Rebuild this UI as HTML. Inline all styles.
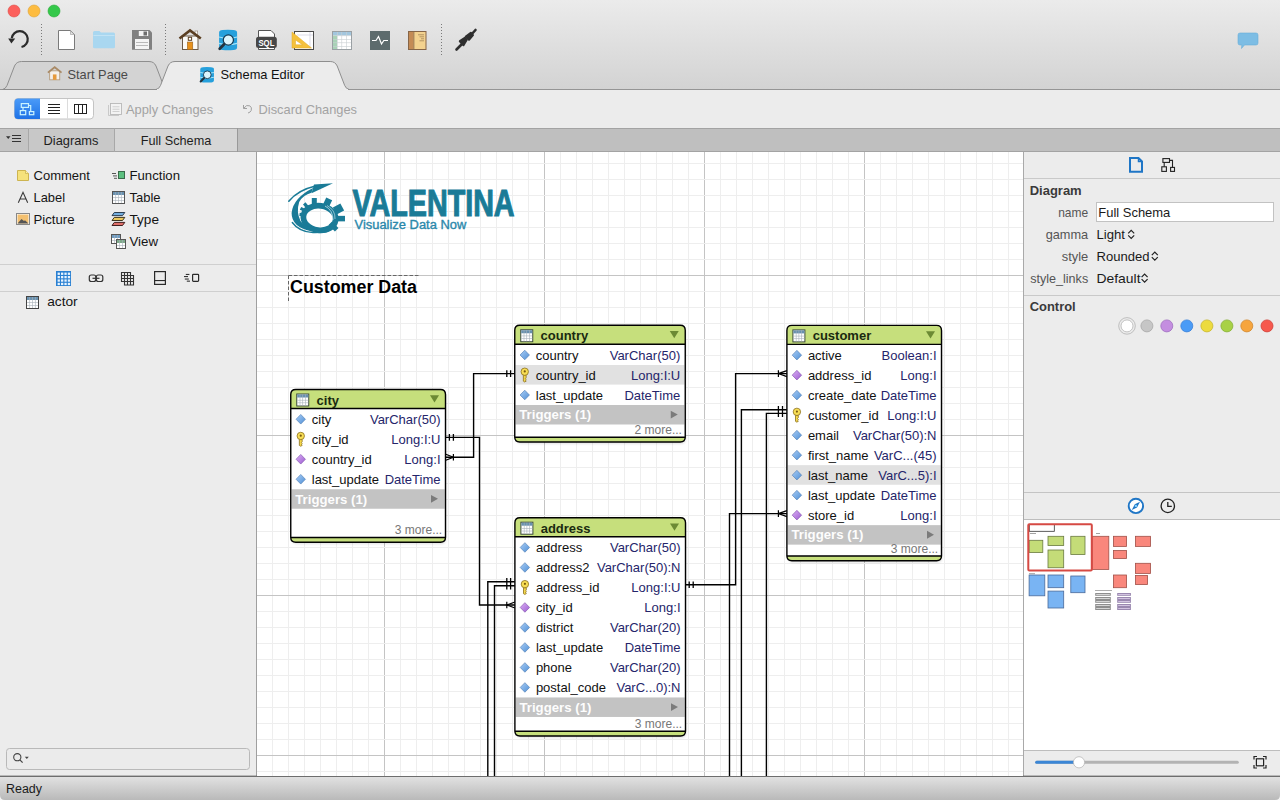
<!DOCTYPE html>
<html><head><meta charset="utf-8"><style>
html,body{margin:0;padding:0;width:1280px;height:800px;overflow:hidden;background:#ececec}
svg text{font-family:"Liberation Sans", sans-serif}
</style></head><body>
<svg width="1280" height="800" viewBox="0 0 1280 800" style="display:block;position:absolute;left:0;top:0">
<defs><linearGradient id="tb" x1="0" y1="0" x2="0" y2="1"><stop offset="0" stop-color="#ebebeb"/><stop offset="1" stop-color="#d3d3d3"/></linearGradient><linearGradient id="sb" x1="0" y1="0" x2="0" y2="1"><stop offset="0" stop-color="#e3e3e3"/><stop offset="1" stop-color="#b9b9b9"/></linearGradient><linearGradient id="hdr" x1="0" y1="0" x2="0" y2="1"><stop offset="0" stop-color="#c8e07e"/><stop offset="1" stop-color="#c4dd78"/></linearGradient><linearGradient id="dia" x1="0" y1="0" x2="1" y2="1"><stop offset="0" stop-color="#a9cdf5"/><stop offset="1" stop-color="#4f8fd6"/></linearGradient><linearGradient id="diap" x1="0" y1="0" x2="1" y2="1"><stop offset="0" stop-color="#dcb0f5"/><stop offset="1" stop-color="#9a5bd0"/></linearGradient><linearGradient id="segb" x1="0" y1="0" x2="0" y2="1"><stop offset="0" stop-color="#4b9bf8"/><stop offset="1" stop-color="#1e72e6"/></linearGradient><filter id="blur1" x="-10%" y="-10%" width="120%" height="120%"><feGaussianBlur stdDeviation="1"/></filter></defs>
<rect x="0" y="0" width="1280" height="89" fill="url(#tb)"/>
<circle cx="14" cy="11" r="6" fill="#fc605c" stroke="#de4a44" stroke-width="0.6"/>
<circle cx="34" cy="11" r="6" fill="#fdbc40" stroke="#dea236" stroke-width="0.6"/>
<circle cx="54" cy="11" r="6" fill="#34c84a" stroke="#27aa35" stroke-width="0.6"/>
<rect x="0" y="89" width="1280" height="1" fill="#959595"/>
<rect x="0" y="90" width="1280" height="38" fill="#ececec"/>
<rect x="0" y="128" width="1280" height="24" fill="#a3a3a3"/>
<rect x="0" y="129" width="1280" height="22" fill="#bfbfbf"/>
<rect x="0" y="129" width="28" height="22" fill="#c4c4c4"/>
<rect x="28" y="128" width="1" height="24" fill="#a8a8a8"/>
<rect x="29" y="129" width="85" height="22" fill="#c8c8c8"/>
<rect x="114" y="128" width="1" height="24" fill="#a8a8a8"/>
<rect x="115" y="129" width="122" height="22" fill="#d6d6d6"/>
<rect x="237" y="128" width="1" height="24" fill="#999"/>
<text x="71" y="144.5" font-size="13" fill="#1e1e1e" font-weight="normal" text-anchor="middle" textLength="55" lengthAdjust="spacingAndGlyphs" >Diagrams</text>
<text x="176" y="144.5" font-size="13" fill="#1e1e1e" font-weight="normal" text-anchor="middle" textLength="70.5" lengthAdjust="spacingAndGlyphs" >Full Schema</text>
<rect x="0" y="152" width="256" height="624" fill="#ececec"/>
<rect x="256" y="152" width="1" height="624" fill="#9f9f9f"/>
<rect x="1023" y="152" width="257" height="624" fill="#ececec"/>
<rect x="1023" y="152" width="1" height="624" fill="#a9a9a9"/>
<rect x="0" y="776" width="1280" height="24" fill="url(#sb)"/>
<rect x="0" y="775.6" width="1280" height="1.4" fill="#6e6e6e"/>
<text x="6" y="792.5" font-size="12.5" fill="#1a1a1a" font-weight="normal" text-anchor="start" textLength="36" lengthAdjust="spacingAndGlyphs" >Ready</text>
<path d="M 0 795 Q 0 800 5 800 L 0 800 Z M 1280 795 Q 1280 800 1275 800 L 1280 800 Z" fill="#f4f4f4"/>
<path d="M 21.5 47 A 8 8 0 1 0 11.8 38.2" fill="none" stroke="#2b2b2b" stroke-width="2.2"/>
<path d="M 8.2 38.6 L 15.2 38.6 L 11.4 43.6 Z" fill="#2b2b2b"/>
<rect x="41.0" y="24" width="1" height="1" fill="#7a7a7a"/>
<rect x="41.0" y="27" width="1" height="1" fill="#7a7a7a"/>
<rect x="41.0" y="30" width="1" height="1" fill="#7a7a7a"/>
<rect x="41.0" y="33" width="1" height="1" fill="#7a7a7a"/>
<rect x="41.0" y="36" width="1" height="1" fill="#7a7a7a"/>
<rect x="41.0" y="39" width="1" height="1" fill="#7a7a7a"/>
<rect x="41.0" y="42" width="1" height="1" fill="#7a7a7a"/>
<rect x="41.0" y="45" width="1" height="1" fill="#7a7a7a"/>
<rect x="41.0" y="48" width="1" height="1" fill="#7a7a7a"/>
<rect x="41.0" y="51" width="1" height="1" fill="#7a7a7a"/>
<rect x="41.0" y="54" width="1" height="1" fill="#7a7a7a"/>
<rect x="165.0" y="24" width="1" height="1" fill="#7a7a7a"/>
<rect x="165.0" y="27" width="1" height="1" fill="#7a7a7a"/>
<rect x="165.0" y="30" width="1" height="1" fill="#7a7a7a"/>
<rect x="165.0" y="33" width="1" height="1" fill="#7a7a7a"/>
<rect x="165.0" y="36" width="1" height="1" fill="#7a7a7a"/>
<rect x="165.0" y="39" width="1" height="1" fill="#7a7a7a"/>
<rect x="165.0" y="42" width="1" height="1" fill="#7a7a7a"/>
<rect x="165.0" y="45" width="1" height="1" fill="#7a7a7a"/>
<rect x="165.0" y="48" width="1" height="1" fill="#7a7a7a"/>
<rect x="165.0" y="51" width="1" height="1" fill="#7a7a7a"/>
<rect x="165.0" y="54" width="1" height="1" fill="#7a7a7a"/>
<rect x="441.0" y="24" width="1" height="1" fill="#7a7a7a"/>
<rect x="441.0" y="27" width="1" height="1" fill="#7a7a7a"/>
<rect x="441.0" y="30" width="1" height="1" fill="#7a7a7a"/>
<rect x="441.0" y="33" width="1" height="1" fill="#7a7a7a"/>
<rect x="441.0" y="36" width="1" height="1" fill="#7a7a7a"/>
<rect x="441.0" y="39" width="1" height="1" fill="#7a7a7a"/>
<rect x="441.0" y="42" width="1" height="1" fill="#7a7a7a"/>
<rect x="441.0" y="45" width="1" height="1" fill="#7a7a7a"/>
<rect x="441.0" y="48" width="1" height="1" fill="#7a7a7a"/>
<rect x="441.0" y="51" width="1" height="1" fill="#7a7a7a"/>
<rect x="441.0" y="54" width="1" height="1" fill="#7a7a7a"/>
<path d="M 58.5 30.5 L 70.5 30.5 L 74.5 34.5 L 74.5 49.5 L 58.5 49.5 Z" fill="#fff" stroke="#7a7a7a" stroke-width="1" stroke-linejoin="bevel"/>
<path d="M 70.5 30.8 L 70.5 34.5 L 74.2 34.5 Z" fill="#e4e4e4" stroke="#9a9a9a" stroke-width="0.6"/>
<path d="M 93 32.5 Q 93 31 94.5 31 L 99.5 31 L 101 32.5 L 113.5 32.5 Q 115 32.5 115 34 L 115 47 Q 115 48.3 113.5 48.3 L 94.5 48.3 Q 93 48.3 93 47 Z" fill="#a9d7f0"/>
<rect x="93.5" y="35" width="21" height="1" fill="#c2e3f5"/>
<path d="M 132 30 L 149.5 30 L 152 32.5 L 152 49.7 L 132 49.7 Z" fill="#808080"/>
<rect x="138.8" y="31" width="9.4" height="5" fill="#f2f2f2"/>
<rect x="143.5" y="31.5" width="3.5" height="4" fill="#6e6e6e"/>
<rect x="135" y="39" width="14" height="10" fill="#f4f4f4"/>
<rect x="136" y="42" width="12" height="0.8" fill="#aaa"/>
<rect x="136" y="45" width="12" height="0.8" fill="#aaa"/>
<rect x="182.5" y="36" width="15.5" height="13.5" fill="#fbfbf8" stroke="#6b5a48" stroke-width="1"/>
<rect x="195" y="31" width="2.7" height="3.5" fill="#fff" stroke="#8a7a6a" stroke-width="0.6"/>
<path d="M 179.5 38.5 L 190 30.5 L 200.8 38.5" fill="none" stroke="#5b3f22" stroke-width="2.6" stroke-linejoin="miter"/>
<rect x="187.3" y="42" width="5.5" height="7.7" fill="#e8921c" stroke="#8a5a20" stroke-width="0.5"/>
<rect x="188.3" y="37.3" width="3.3" height="3" fill="#fff" stroke="#5b3f22" stroke-width="1"/>
<g transform="translate(218.5,30) scale(1.0)">
<path d="M 0.6 2.5 Q 0.6 0 4 0 Q 9.3 -0.6 14.8 0 Q 18.6 0 18.6 2.5 L 18.6 17.3 Q 18.6 20 15 20 Q 9.3 20.4 4 20 Q 0.6 20 0.6 17.3 Z" fill="#26a0dc"/>
<path d="M 0.6 7 Q 9.5 9.6 18.6 7 M 0.6 13.3 Q 9.5 15.9 18.6 13.3" fill="none" stroke="#a6e6fb" stroke-width="1.3"/>
<circle cx="9.85" cy="10" r="5.1" fill="#dcf4fc" stroke="#163a52" stroke-width="1.2"/>
<path d="M 5.6 14.3 L 1.2 18.7" stroke="#243440" stroke-width="2.8" stroke-linecap="round"/>
</g>
<path d="M 258.5 30.5 L 271 30.5 L 274.5 34 L 274.5 49.5 L 258.5 49.5 Z" fill="#fff" stroke="#555" stroke-width="1"/>
<rect x="256" y="36.8" width="20.8" height="11.2" rx="2.5" fill="#474747"/>
<text x="266.4" y="46" font-size="9.5" fill="#fff" font-weight="bold" text-anchor="middle" textLength="16" lengthAdjust="spacingAndGlyphs" >SQL</text>
<rect x="294.5" y="31.5" width="19" height="18" fill="#fff" stroke="#4a4a4a" stroke-width="1"/>
<path d="M 297 35 L 313 35 M 310 32 L 310 49" stroke="#c8c8d8" stroke-width="0.6"/>
<path d="M 292 32 L 292 48 L 311.5 48 Z M 295.5 40 L 295.5 44.8 L 302.5 44.8 Z" fill="#f5c13c" fill-rule="evenodd" stroke="#e0a820" stroke-width="0.5"/>
<rect x="332.5" y="31.5" width="19" height="18" fill="#fff" stroke="#9aa0a4" stroke-width="1"/>
<rect x="333" y="32" width="18" height="3.5" fill="#a2c6de"/>
<rect x="333" y="35.5" width="4" height="13.5" fill="#a8d2b6"/>
<rect x="333" y="35.5" width="18" height="0.6" fill="#c9cfd2"/>
<rect x="333" y="39" width="18" height="0.6" fill="#c9cfd2"/>
<rect x="333" y="42.5" width="18" height="0.6" fill="#c9cfd2"/>
<rect x="333" y="46" width="18" height="0.6" fill="#c9cfd2"/>
<rect x="337" y="32" width="0.6" height="17" fill="#c9cfd2"/>
<rect x="341.5" y="32" width="0.6" height="17" fill="#c9cfd2"/>
<rect x="346" y="32" width="0.6" height="17" fill="#c9cfd2"/>
<rect x="370" y="31" width="20" height="19" fill="#5d6b6d"/>
<path d="M 372 40.5 L 376 40.5 L 378.5 36.5 L 381.5 44 L 383.8 40.5 L 388 40.5" fill="none" stroke="#fff" stroke-width="1.2"/>
<rect x="408.5" y="31.5" width="17.5" height="18" fill="#f3d28f" stroke="#866547" stroke-width="1"/>
<rect x="409" y="32" width="4.5" height="17" fill="#c48b55"/>
<rect x="413.5" y="32" width="0.8" height="17" fill="#866547"/>
<rect x="418" y="34.5" width="6" height="0.7" fill="#9a7a50"/>
<rect x="419.5" y="36.5" width="4.5" height="0.7" fill="#9a7a50"/>
<rect x="421" y="38.5" width="3" height="0.7" fill="#9a7a50"/>
<rect x="419.5" y="40.5" width="4.5" height="0.7" fill="#9a7a50"/>
<path d="M 456.5 49.5 L 461.5 44.5 M 470.5 35.5 L 475.5 30" stroke="#2f2f2f" stroke-width="2.6" stroke-linecap="round"/>
<path d="M 459.8 41.2 L 464.8 37.8 L 466.8 39.8 L 463.5 45.2 Z" fill="#2f2f2f" stroke="#2f2f2f" stroke-width="2" stroke-linejoin="round"/>
<path d="M 465.8 36.5 L 470.8 32.8 L 473 35.2 L 469 39.8 Z" fill="#2f2f2f" stroke="#2f2f2f" stroke-width="2" stroke-linejoin="round"/>
<path d="M 1240 33 L 1256 33 Q 1258 33 1258 35 L 1258 43 Q 1258 45 1256 45 L 1244.5 45 L 1241.5 48.5 L 1241.8 45 L 1240 45 Q 1238 45 1238 43 L 1238 35 Q 1238 33 1240 33 Z" fill="#7dbde4" stroke="#6aaed8" stroke-width="0.6"/>
<path d="M 1130 158 L 1138.5 158 L 1142 161.5 L 1142 171.8 L 1130 171.8 Z" fill="none" stroke="#1f76c6" stroke-width="2"/>
<path d="M 1138.5 158 L 1138.5 161.5 L 1142 161.5" fill="none" stroke="#1f76c6" stroke-width="1.5"/>
<g fill="none" stroke="#222" stroke-width="1.1"><rect x="1162.9" y="158.6" width="6.6" height="3.8"/><rect x="1161.8" y="166.8" width="4.6" height="4.6"/><rect x="1170.6" y="167.4" width="3.9" height="4"/><path d="M 1164.2 162.4 L 1164.2 166.8 M 1169.5 160.4 L 1172.5 160.4 L 1172.5 167.4"/></g>
<rect x="1024" y="178" width="256" height="1" fill="#c9c9c9"/>
<text x="1029.7" y="195" font-size="13" fill="#3a3a3a" font-weight="bold" text-anchor="start" textLength="52" lengthAdjust="spacingAndGlyphs" >Diagram</text>
<text x="1088.2" y="216.8" font-size="13" fill="#555" font-weight="normal" text-anchor="end" textLength="30" lengthAdjust="spacingAndGlyphs" >name</text>
<text x="1088.2" y="238.8" font-size="13" fill="#555" font-weight="normal" text-anchor="end" textLength="42.5" lengthAdjust="spacingAndGlyphs" >gamma</text>
<text x="1088.2" y="260.7" font-size="13" fill="#555" font-weight="normal" text-anchor="end" textLength="26.5" lengthAdjust="spacingAndGlyphs" >style</text>
<text x="1088.2" y="282.7" font-size="13" fill="#555" font-weight="normal" text-anchor="end" textLength="58" lengthAdjust="spacingAndGlyphs" >style_links</text>
<rect x="1096.5" y="202.5" width="177" height="19" fill="#fff" stroke="#c2c2c2" stroke-width="1"/>
<text x="1098.3" y="216.5" font-size="13" fill="#1a1a1a" font-weight="normal" text-anchor="start" textLength="72" lengthAdjust="spacingAndGlyphs" >Full Schema</text>
<text x="1096.5" y="238.8" font-size="13" fill="#1a1a1a" font-weight="normal" text-anchor="start" textLength="28.5" lengthAdjust="spacingAndGlyphs" >Light</text>
<path d="M 1128.2 233.3 L 1131.2 230.3 L 1134.2 233.3 M 1128.2 235.3 L 1131.2 238.3 L 1134.2 235.3" fill="none" stroke="#222" stroke-width="1.2"/>
<text x="1096.5" y="260.7" font-size="13" fill="#1a1a1a" font-weight="normal" text-anchor="start" textLength="53" lengthAdjust="spacingAndGlyphs" >Rounded</text>
<path d="M 1151.8 255.2 L 1154.8 252.2 L 1157.8 255.2 M 1151.8 257.2 L 1154.8 260.2 L 1157.8 257.2" fill="none" stroke="#222" stroke-width="1.2"/>
<text x="1096.5" y="282.7" font-size="13" fill="#1a1a1a" font-weight="normal" text-anchor="start" textLength="44" lengthAdjust="spacingAndGlyphs" >Default</text>
<path d="M 1141.6 277.2 L 1144.6 274.2 L 1147.6 277.2 M 1141.6 279.2 L 1144.6 282.2 L 1147.6 279.2" fill="none" stroke="#222" stroke-width="1.2"/>
<rect x="1024" y="295" width="256" height="1" fill="#c9c9c9"/>
<text x="1029.7" y="311" font-size="13" fill="#3a3a3a" font-weight="bold" text-anchor="start" textLength="46" lengthAdjust="spacingAndGlyphs" >Control</text>
<circle cx="1127" cy="325.9" r="8.3" fill="none" stroke="#b9b9b9" stroke-width="0.9"/>
<circle cx="1127" cy="325.9" r="6" fill="#fff" stroke="#b5b5b5" stroke-width="0.8"/>
<circle cx="1146.9" cy="325.9" r="6" fill="#c6c6c6" stroke="#a8a8a8" stroke-width="0.8"/>
<circle cx="1166.8" cy="325.9" r="6" fill="#c48ee0" stroke="#a070c0" stroke-width="0.8"/>
<circle cx="1186.8" cy="325.9" r="6" fill="#4a9bf6" stroke="#3a80d8" stroke-width="0.8"/>
<circle cx="1206.9" cy="325.9" r="6" fill="#ecdb3f" stroke="#c8b830" stroke-width="0.8"/>
<circle cx="1226.9" cy="325.9" r="6" fill="#a8d146" stroke="#88b038" stroke-width="0.8"/>
<circle cx="1246.8" cy="325.9" r="6" fill="#f6a53e" stroke="#d08830" stroke-width="0.8"/>
<circle cx="1267" cy="325.9" r="6" fill="#f6594e" stroke="#d04038" stroke-width="0.8"/>
<rect x="1024" y="492" width="256" height="1" fill="#c4c4c4"/>
<circle cx="1135.9" cy="505.9" r="7.2" fill="#fff" stroke="#1f76c6" stroke-width="1.9"/>
<path d="M 1140 501.8 L 1137 507.5 L 1131.8 510 L 1134.8 504.3 Z" fill="#1f76c6"/>
<circle cx="1135.9" cy="505.9" r="1.2" fill="#7fd0ff"/>
<circle cx="1167.8" cy="505.9" r="6.7" fill="none" stroke="#222" stroke-width="1.3"/>
<path d="M 1167.8 502 L 1167.8 506.4 L 1171.8 506.4" fill="none" stroke="#222" stroke-width="1.3"/>
<rect x="1024" y="519" width="256" height="1" fill="#bdbdbd"/>
<rect x="1024" y="520" width="256" height="230" fill="#fff"/>
<rect x="1029.1" y="540.3" width="13.70" height="12.20" fill="#c4dc78" stroke="#6a7a40" stroke-width="0.8"/>
<rect x="1048" y="536.3" width="15.70" height="9.30" fill="#c4dc78" stroke="#6a7a40" stroke-width="0.8"/>
<rect x="1070.8" y="536.3" width="14.20" height="18.20" fill="#c4dc78" stroke="#6a7a40" stroke-width="0.8"/>
<rect x="1048" y="550" width="15.70" height="17.75" fill="#c4dc78" stroke="#6a7a40" stroke-width="0.8"/>
<rect x="1092.1" y="536.3" width="16.70" height="33.10" fill="#f9877c" stroke="#a05048" stroke-width="0.8"/>
<rect x="1113.4" y="536.3" width="13.20" height="10.10" fill="#f9877c" stroke="#a05048" stroke-width="0.8"/>
<rect x="1135.4" y="536.3" width="15.20" height="10.10" fill="#f9877c" stroke="#a05048" stroke-width="0.8"/>
<rect x="1113.4" y="550.5" width="13.20" height="8.10" fill="#f9877c" stroke="#a05048" stroke-width="0.8"/>
<rect x="1135.4" y="563.3" width="15.20" height="10.10" fill="#f9877c" stroke="#a05048" stroke-width="0.8"/>
<rect x="1113.4" y="575" width="13.20" height="12.70" fill="#f9877c" stroke="#a05048" stroke-width="0.8"/>
<rect x="1135.4" y="575.5" width="12.20" height="9.10" fill="#f9877c" stroke="#a05048" stroke-width="0.8"/>
<rect x="1029.1" y="575" width="15.70" height="20.80" fill="#79b4f3" stroke="#4a6a9a" stroke-width="0.8"/>
<rect x="1048" y="575" width="15.70" height="12.70" fill="#79b4f3" stroke="#4a6a9a" stroke-width="0.8"/>
<rect x="1070.8" y="576" width="14.20" height="16.70" fill="#79b4f3" stroke="#4a6a9a" stroke-width="0.8"/>
<rect x="1048" y="591.1" width="15.70" height="16.90" fill="#79b4f3" stroke="#4a6a9a" stroke-width="0.8"/>
<rect x="1095.2" y="593" width="15.6" height="2.8" fill="#8e8e8e"/>
<rect x="1096.2" y="594.1" width="13.6" height="0.7" fill="#f2f2f2"/>
<rect x="1117.2" y="593" width="13.7" height="2.8" fill="#9a88b0"/>
<rect x="1118.2" y="594.1" width="11.7" height="0.7" fill="#eadcf5"/>
<rect x="1095.2" y="597" width="15.6" height="5.8" fill="#8e8e8e"/>
<rect x="1096.2" y="598.1" width="13.6" height="0.7" fill="#f2f2f2"/>
<rect x="1096.2" y="601.0" width="13.6" height="0.7" fill="#f2f2f2"/>
<rect x="1117.2" y="597" width="13.7" height="5.8" fill="#9a88b0"/>
<rect x="1118.2" y="598.1" width="11.7" height="0.7" fill="#eadcf5"/>
<rect x="1118.2" y="601.0" width="11.7" height="0.7" fill="#eadcf5"/>
<rect x="1095.2" y="604" width="15.6" height="6.0" fill="#8e8e8e"/>
<rect x="1096.2" y="605.1" width="13.6" height="0.7" fill="#f2f2f2"/>
<rect x="1096.2" y="608.2" width="13.6" height="0.7" fill="#f2f2f2"/>
<rect x="1117.2" y="604" width="13.7" height="6.0" fill="#9a88b0"/>
<rect x="1118.2" y="605.1" width="11.7" height="0.7" fill="#eadcf5"/>
<rect x="1118.2" y="608.2" width="11.7" height="0.7" fill="#eadcf5"/>
<rect x="1029.3" y="524.5" width="25" height="6.8" fill="none" stroke="#333" stroke-width="0.8"/>
<rect x="1030" y="533" width="6" height="0.6" fill="#666"/><rect x="1096" y="533" width="4" height="0.6" fill="#666"/>
<rect x="1029" y="573.5" width="6" height="0.6" fill="#666"/><rect x="1095" y="590" width="17" height="0.8" fill="#999"/>
<rect x="1028.3" y="524.3" width="63.5" height="46.3" rx="1" fill="none" stroke="#d64a44" stroke-width="2"/>
<rect x="1024" y="750" width="256" height="1" fill="#bdbdbd"/>
<rect x="1035.2" y="760.8" width="203.6" height="3" rx="1.5" fill="#b3b3b3"/>
<rect x="1035.2" y="760.8" width="44" height="3" rx="1.5" fill="#3b86d6"/>
<circle cx="1079" cy="762.3" r="5.6" fill="#fff" stroke="#b0b0b0" stroke-width="0.7"/>
<path d="M 1254 759.5 L 1254 756.5 L 1257 756.5 M 1263 756.5 L 1266 756.5 L 1266 759.5 M 1266 765 L 1266 768 L 1263 768 M 1257 768 L 1254 768 L 1254 765" fill="none" stroke="#222" stroke-width="1.2"/>
<rect x="1256.4" y="758.8" width="7.2" height="7" fill="none" stroke="#222" stroke-width="1.2"/>
<path d="M 17.5 170.5 L 25.5 170.5 L 28.5 173.5 L 28.5 180.5 L 17.5 180.5 Z" fill="#f6e27b" stroke="#cdb450" stroke-width="1"/>
<path d="M 25.5 170.5 L 25.5 173.5 L 28.5 173.5" fill="#fbf0b0" stroke="#cdb450" stroke-width="0.8"/>
<text x="33.5" y="180" font-size="13" fill="#151515" font-weight="normal" text-anchor="start" textLength="56.5" lengthAdjust="spacingAndGlyphs" >Comment</text>
<path d="M 18.3 202.7 L 23 192.3 L 27.7 202.7 M 19.9 199 L 26.1 199" fill="none" stroke="#3a3a3a" stroke-width="1.1"/>
<text x="33.5" y="202" font-size="13" fill="#151515" font-weight="normal" text-anchor="start" textLength="31.5" lengthAdjust="spacingAndGlyphs" >Label</text>
<rect x="16.5" y="213.5" width="13" height="11" fill="#fff" stroke="#888" stroke-width="1"/>
<rect x="17.5" y="214.5" width="11" height="9" fill="#f3c070"/>
<path d="M 17.5 223.5 L 21.5 219 L 24 221 L 25 220.2 L 28.5 223.5 Z" fill="#555"/>
<text x="33.5" y="224" font-size="13" fill="#151515" font-weight="normal" text-anchor="start" textLength="41" lengthAdjust="spacingAndGlyphs" >Picture</text>
<rect x="112" y="173" width="4" height="1" fill="#555"/>
<rect x="113" y="175.4" width="4" height="1" fill="#555"/>
<rect x="114" y="177.8" width="3" height="1" fill="#555"/>
<rect x="118.5" y="171.5" width="6" height="7" fill="#5cc07f" stroke="#3a6a4a" stroke-width="1"/>
<text x="129.5" y="180" font-size="13" fill="#151515" font-weight="normal" text-anchor="start" textLength="50.5" lengthAdjust="spacingAndGlyphs" >Function</text>
<rect x="112.5" y="191.5" width="12" height="12" fill="#fff" stroke="#555" stroke-width="1"/>
<rect x="113" y="192" width="11" height="3" fill="#6a92b0"/>
<rect x="115.45" y="192" width="0.6" height="11" fill="#a9b3bb"/>
<rect x="118.20" y="192" width="0.6" height="11" fill="#a9b3bb"/>
<rect x="120.95" y="192" width="0.6" height="11" fill="#a9b3bb"/>
<rect x="113" y="197.37" width="11" height="0.6" fill="#a9b3bb"/>
<rect x="113" y="200.03" width="11" height="0.6" fill="#a9b3bb"/>
<text x="129.5" y="202" font-size="13" fill="#151515" font-weight="normal" text-anchor="start" textLength="31" lengthAdjust="spacingAndGlyphs" >Table</text>
<path d="M 114.3 212.5 L 124.8 212.5 L 122.5 215.6 L 112 215.6 Z" fill="#74aede" stroke="#1f2f40" stroke-width="0.9" stroke-linejoin="round"/>
<path d="M 114.3 217.4 L 124.8 217.4 L 122.5 220.5 L 112 220.5 Z" fill="#ebc85a" stroke="#2a2410" stroke-width="0.9" stroke-linejoin="round"/>
<path d="M 114.3 222.4 L 124.8 222.4 L 122.5 225.5 L 112 225.5 Z" fill="#e0706a" stroke="#301010" stroke-width="0.9" stroke-linejoin="round"/>
<text x="129.5" y="224" font-size="13" fill="#151515" font-weight="normal" text-anchor="start" textLength="29.5" lengthAdjust="spacingAndGlyphs" >Type</text>
<rect x="111.5" y="234.5" width="9" height="9" fill="#fff" stroke="#555" stroke-width="1"/>
<rect x="112" y="235" width="8" height="3" fill="#6f9cc2"/>
<rect x="114.37" y="235" width="0.6" height="8" fill="#a9b3bb"/>
<rect x="117.03" y="235" width="0.6" height="8" fill="#a9b3bb"/>
<rect x="112" y="240.20" width="8" height="0.6" fill="#a9b3bb"/>
<rect x="116.5" y="239.5" width="9" height="9" fill="#fff" stroke="#555" stroke-width="1"/>
<rect x="117" y="240" width="8" height="3" fill="#7faa8c"/>
<rect x="119.37" y="240" width="0.6" height="8" fill="#a9b3bb"/>
<rect x="122.03" y="240" width="0.6" height="8" fill="#a9b3bb"/>
<rect x="117" y="245.20" width="8" height="0.6" fill="#a9b3bb"/>
<text x="129.5" y="246" font-size="13" fill="#151515" font-weight="normal" text-anchor="start" textLength="28.5" lengthAdjust="spacingAndGlyphs" >View</text>
<rect x="0" y="264" width="256" height="1" fill="#cfcfcf"/>
<rect x="0" y="291" width="256" height="1" fill="#cfcfcf"/>
<rect x="56" y="271" width="15" height="15" fill="#2a80d2"/>
<rect x="57.6" y="272.6" width="2.3" height="2.3" fill="#e8f4ff"/>
<rect x="57.6" y="276.0" width="2.3" height="2.3" fill="#e8f4ff"/>
<rect x="57.6" y="279.4" width="2.3" height="2.3" fill="#e8f4ff"/>
<rect x="57.6" y="282.8" width="2.3" height="2.3" fill="#e8f4ff"/>
<rect x="61.0" y="272.6" width="2.3" height="2.3" fill="#e8f4ff"/>
<rect x="61.0" y="276.0" width="2.3" height="2.3" fill="#e8f4ff"/>
<rect x="61.0" y="279.4" width="2.3" height="2.3" fill="#e8f4ff"/>
<rect x="61.0" y="282.8" width="2.3" height="2.3" fill="#e8f4ff"/>
<rect x="64.4" y="272.6" width="2.3" height="2.3" fill="#e8f4ff"/>
<rect x="64.4" y="276.0" width="2.3" height="2.3" fill="#e8f4ff"/>
<rect x="64.4" y="279.4" width="2.3" height="2.3" fill="#e8f4ff"/>
<rect x="64.4" y="282.8" width="2.3" height="2.3" fill="#e8f4ff"/>
<rect x="67.8" y="272.6" width="2.3" height="2.3" fill="#e8f4ff"/>
<rect x="67.8" y="276.0" width="2.3" height="2.3" fill="#e8f4ff"/>
<rect x="67.8" y="279.4" width="2.3" height="2.3" fill="#e8f4ff"/>
<rect x="67.8" y="282.8" width="2.3" height="2.3" fill="#e8f4ff"/>
<rect x="89.3" y="275" width="6.5" height="6.5" rx="2" fill="none" stroke="#333" stroke-width="1.2"/>
<rect x="96.3" y="275" width="6.5" height="6.5" rx="2" fill="none" stroke="#333" stroke-width="1.2"/>
<rect x="92.5" y="277.7" width="7" height="1.2" fill="#333"/>
<g fill="none" stroke="#333" stroke-width="1.1"><path d="M 121.5 272.5 L 130.5 272.5 L 130.5 275.5 L 133.5 275.5 L 133.5 285 L 124.5 285 L 124.5 281.5 L 121.5 281.5 Z"/><path d="M 121.5 275.5 L 130.5 275.5 M 121.5 278.5 L 133.5 278.5 M 124.5 281.5 L 133.5 281.5 M 124.5 272.5 L 124.5 281.5 M 127.5 272.5 L 127.5 285 M 130.5 275.5 L 130.5 285"/></g>
<rect x="154.6" y="271.6" width="10.8" height="12.8" fill="none" stroke="#2a2a2a" stroke-width="1.2"/>
<rect x="154.6" y="280" width="10.8" height="1.1" fill="#2a2a2a"/>
<rect x="185.8" y="273.9" width="3.6" height="1.1" fill="#333"/>
<rect x="184" y="276" width="4" height="1.1" fill="#333"/>
<rect x="184.8" y="278.5" width="4" height="1.1" fill="#333"/>
<rect x="186.8" y="280.6" width="3.2" height="1.1" fill="#333"/>
<rect x="192.6" y="274.3" width="6" height="7.1" rx="0.8" fill="none" stroke="#2a2a2a" stroke-width="1.2"/>
<rect x="26.5" y="296.5" width="12" height="12" fill="#fff" stroke="#444" stroke-width="1"/>
<rect x="27" y="297" width="11" height="3" fill="#6a92b0"/>
<rect x="29.45" y="297" width="0.6" height="11" fill="#a9b3bb"/>
<rect x="32.20" y="297" width="0.6" height="11" fill="#a9b3bb"/>
<rect x="34.95" y="297" width="0.6" height="11" fill="#a9b3bb"/>
<rect x="27" y="302.37" width="11" height="0.6" fill="#a9b3bb"/>
<rect x="27" y="305.03" width="11" height="0.6" fill="#a9b3bb"/>
<text x="47.2" y="306.4" font-size="13" fill="#151515" font-weight="normal" text-anchor="start" textLength="30.5" lengthAdjust="spacingAndGlyphs" >actor</text>
<rect x="6.5" y="748.5" width="243" height="21" rx="3" fill="#ebebeb" stroke="#b9b9b9" stroke-width="1"/>
<circle cx="17.3" cy="757.2" r="3.6" fill="none" stroke="#444" stroke-width="1.1"/>
<path d="M 19.9 759.8 L 22.6 762.6" stroke="#444" stroke-width="1.2"/>
<path d="M 24.8 756.8 L 28.8 756.8 L 26.8 759 Z" fill="#444"/>
<path d="M 2.5 89.5 Q 5.5 89 7.0 85.5 L 14.5 66 Q 16.5 61.5 21.5 61.5 L 149 61.5 Q 154 61.5 156 66 L 163.5 85.5 Q 165 89 168 89.5 Z" fill="#d3d3d3" stroke="#8e8e8e" stroke-width="1"/>
<path d="M 156 89.5 Q 159 89 160.5 85.5 L 168 66 Q 170 61.5 175 61.5 L 330.2 61.5 Q 335.2 61.5 337.2 66 L 344.7 85.5 Q 346.2 89 349.2 89.5 Z" fill="#ececec" stroke="#8e8e8e" stroke-width="1"/>
<rect x="157" y="89" width="191" height="1.2" fill="#ececec"/>
<g transform="translate(47.5,66.5) scale(0.72)">
<rect x="3" y="6" width="14" height="12.5" fill="#f5f0ea" stroke="#b59a7a" stroke-width="1.2"/>
<path d="M 0.5 8.5 L 10 1 L 19.5 8.5" fill="none" stroke="#a98a66" stroke-width="2.4"/>
<rect x="7.5" y="11" width="5" height="7.5" fill="#e69a3c"/>
</g>
<text x="67.5" y="79" font-size="13" fill="#4a4a4a" font-weight="normal" text-anchor="start" textLength="60.5" lengthAdjust="spacingAndGlyphs" >Start Page</text>
<g transform="translate(199.8,67.2) scale(0.76)">
<path d="M 0.6 2.5 Q 0.6 0 4 0 Q 9.3 -0.6 14.8 0 Q 18.6 0 18.6 2.5 L 18.6 17.3 Q 18.6 20 15 20 Q 9.3 20.4 4 20 Q 0.6 20 0.6 17.3 Z" fill="#26a0dc"/>
<path d="M 0.6 7 Q 9.5 9.6 18.6 7 M 0.6 13.3 Q 9.5 15.9 18.6 13.3" fill="none" stroke="#a6e6fb" stroke-width="1.3"/>
<circle cx="9.85" cy="10" r="5.1" fill="#dcf4fc" stroke="#163a52" stroke-width="1.2"/>
<path d="M 5.6 14.3 L 1.2 18.7" stroke="#243440" stroke-width="2.8" stroke-linecap="round"/>
</g>
<text x="220.4" y="79" font-size="13" fill="#111" font-weight="normal" text-anchor="start" textLength="84.2" lengthAdjust="spacingAndGlyphs" >Schema Editor</text>
<rect x="14.5" y="98.5" width="79" height="20.5" rx="3.5" fill="#fff" stroke="#c4c4c4" stroke-width="1"/>
<path d="M 18 98.5 L 40 98.5 L 40 119 L 18 119 Q 14.5 119 14.5 115.5 L 14.5 102 Q 14.5 98.5 18 98.5 Z" fill="url(#segb)"/>
<rect x="67" y="99" width="0.8" height="19.5" fill="#d4d4d4"/>
<g fill="none" stroke="#c9f3ff" stroke-width="1.2"><rect x="21.3" y="103.6" width="7.2" height="3.8"/><rect x="20.3" y="110.6" width="5.4" height="4.1"/><rect x="29.4" y="111.6" width="4.4" height="3.1"/><path d="M 23 107.4 L 23 110.6 M 28.5 105.5 L 30.7 105.5 L 30.7 111.6"/></g>
<rect x="48" y="104.0" width="12" height="1" fill="#222"/>
<rect x="48" y="107.0" width="12" height="1" fill="#222"/>
<rect x="48" y="110.0" width="12" height="1" fill="#222"/>
<rect x="48" y="113.0" width="12" height="1" fill="#222"/>
<rect x="74.5" y="104.5" width="12" height="9" fill="none" stroke="#222" stroke-width="1"/>
<rect x="78" y="104.5" width="1" height="9" fill="#222"/><rect x="82" y="104.5" width="1" height="9" fill="#222"/>
<rect x="110.5" y="103.5" width="11" height="11" fill="#f3f3f3" stroke="#b8b8b8" stroke-width="0.9"/>
<path d="M 108.5 105 L 108.5 115.5 L 119 115.5" fill="none" stroke="#c0c0c0" stroke-width="0.8"/>
<rect x="112.5" y="106.5" width="7" height="0.7" fill="#c0c0c0"/>
<rect x="112.5" y="108.8" width="7" height="0.7" fill="#c0c0c0"/>
<rect x="112.5" y="111.1" width="7" height="0.7" fill="#c0c0c0"/>
<text x="125.9" y="113.5" font-size="13" fill="#a3a3a3" font-weight="normal" text-anchor="start" textLength="87.3" lengthAdjust="spacingAndGlyphs" >Apply Changes</text>
<path d="M 243.5 105 L 243.5 108.5 L 247 108.5" fill="none" stroke="#a0a0a0" stroke-width="1"/>
<path d="M 243.8 108.2 Q 246.5 104.2 249.8 105.8 Q 252.3 107.5 251.2 110.5 Q 250.3 112.5 248 113" fill="none" stroke="#a0a0a0" stroke-width="1"/>
<text x="258.6" y="113.5" font-size="13" fill="#a3a3a3" font-weight="normal" text-anchor="start" textLength="98.4" lengthAdjust="spacingAndGlyphs" >Discard Changes</text>
<path d="M 6 136.3 L 10.5 136.3 L 8.25 139 Z" fill="#333"/>
<rect x="12" y="135" width="9" height="1" fill="#333"/>
<rect x="12" y="138" width="9" height="1" fill="#333"/>
<rect x="12" y="141" width="9" height="1" fill="#333"/>
<svg x="257" y="152" width="766" height="624" overflow="hidden"><g transform="translate(-257,-152)">
<rect x="257" y="152" width="766" height="624" fill="#fff"/>
<rect x="272" y="152" width="1" height="624" fill="#eeeeee"/>
<rect x="288" y="152" width="1" height="624" fill="#eeeeee"/>
<rect x="304" y="152" width="1" height="624" fill="#eeeeee"/>
<rect x="320" y="152" width="1" height="624" fill="#eeeeee"/>
<rect x="336" y="152" width="1" height="624" fill="#eeeeee"/>
<rect x="352" y="152" width="1" height="624" fill="#eeeeee"/>
<rect x="368" y="152" width="1" height="624" fill="#eeeeee"/>
<rect x="384" y="152" width="1" height="624" fill="#c4c4c4"/>
<rect x="400" y="152" width="1" height="624" fill="#eeeeee"/>
<rect x="416" y="152" width="1" height="624" fill="#eeeeee"/>
<rect x="432" y="152" width="1" height="624" fill="#eeeeee"/>
<rect x="448" y="152" width="1" height="624" fill="#eeeeee"/>
<rect x="464" y="152" width="1" height="624" fill="#eeeeee"/>
<rect x="480" y="152" width="1" height="624" fill="#eeeeee"/>
<rect x="496" y="152" width="1" height="624" fill="#eeeeee"/>
<rect x="512" y="152" width="1" height="624" fill="#eeeeee"/>
<rect x="528" y="152" width="1" height="624" fill="#eeeeee"/>
<rect x="544" y="152" width="1" height="624" fill="#c4c4c4"/>
<rect x="560" y="152" width="1" height="624" fill="#eeeeee"/>
<rect x="576" y="152" width="1" height="624" fill="#eeeeee"/>
<rect x="592" y="152" width="1" height="624" fill="#eeeeee"/>
<rect x="608" y="152" width="1" height="624" fill="#eeeeee"/>
<rect x="624" y="152" width="1" height="624" fill="#eeeeee"/>
<rect x="640" y="152" width="1" height="624" fill="#eeeeee"/>
<rect x="656" y="152" width="1" height="624" fill="#eeeeee"/>
<rect x="672" y="152" width="1" height="624" fill="#eeeeee"/>
<rect x="688" y="152" width="1" height="624" fill="#eeeeee"/>
<rect x="704" y="152" width="1" height="624" fill="#c4c4c4"/>
<rect x="720" y="152" width="1" height="624" fill="#eeeeee"/>
<rect x="736" y="152" width="1" height="624" fill="#eeeeee"/>
<rect x="752" y="152" width="1" height="624" fill="#eeeeee"/>
<rect x="768" y="152" width="1" height="624" fill="#eeeeee"/>
<rect x="784" y="152" width="1" height="624" fill="#eeeeee"/>
<rect x="800" y="152" width="1" height="624" fill="#eeeeee"/>
<rect x="816" y="152" width="1" height="624" fill="#eeeeee"/>
<rect x="832" y="152" width="1" height="624" fill="#eeeeee"/>
<rect x="848" y="152" width="1" height="624" fill="#eeeeee"/>
<rect x="864" y="152" width="1" height="624" fill="#c4c4c4"/>
<rect x="880" y="152" width="1" height="624" fill="#eeeeee"/>
<rect x="896" y="152" width="1" height="624" fill="#eeeeee"/>
<rect x="912" y="152" width="1" height="624" fill="#eeeeee"/>
<rect x="928" y="152" width="1" height="624" fill="#eeeeee"/>
<rect x="944" y="152" width="1" height="624" fill="#eeeeee"/>
<rect x="960" y="152" width="1" height="624" fill="#eeeeee"/>
<rect x="976" y="152" width="1" height="624" fill="#eeeeee"/>
<rect x="992" y="152" width="1" height="624" fill="#eeeeee"/>
<rect x="1008" y="152" width="1" height="624" fill="#eeeeee"/>
<rect x="257" y="163" width="766" height="1" fill="#eeeeee"/>
<rect x="257" y="179" width="766" height="1" fill="#eeeeee"/>
<rect x="257" y="195" width="766" height="1" fill="#eeeeee"/>
<rect x="257" y="211" width="766" height="1" fill="#eeeeee"/>
<rect x="257" y="227" width="766" height="1" fill="#eeeeee"/>
<rect x="257" y="243" width="766" height="1" fill="#eeeeee"/>
<rect x="257" y="259" width="766" height="1" fill="#eeeeee"/>
<rect x="257" y="275" width="766" height="1" fill="#c4c4c4"/>
<rect x="257" y="291" width="766" height="1" fill="#eeeeee"/>
<rect x="257" y="307" width="766" height="1" fill="#eeeeee"/>
<rect x="257" y="323" width="766" height="1" fill="#eeeeee"/>
<rect x="257" y="339" width="766" height="1" fill="#eeeeee"/>
<rect x="257" y="355" width="766" height="1" fill="#eeeeee"/>
<rect x="257" y="371" width="766" height="1" fill="#eeeeee"/>
<rect x="257" y="387" width="766" height="1" fill="#eeeeee"/>
<rect x="257" y="403" width="766" height="1" fill="#eeeeee"/>
<rect x="257" y="419" width="766" height="1" fill="#eeeeee"/>
<rect x="257" y="435" width="766" height="1" fill="#c4c4c4"/>
<rect x="257" y="451" width="766" height="1" fill="#eeeeee"/>
<rect x="257" y="467" width="766" height="1" fill="#eeeeee"/>
<rect x="257" y="483" width="766" height="1" fill="#eeeeee"/>
<rect x="257" y="499" width="766" height="1" fill="#eeeeee"/>
<rect x="257" y="515" width="766" height="1" fill="#eeeeee"/>
<rect x="257" y="531" width="766" height="1" fill="#eeeeee"/>
<rect x="257" y="547" width="766" height="1" fill="#eeeeee"/>
<rect x="257" y="563" width="766" height="1" fill="#eeeeee"/>
<rect x="257" y="579" width="766" height="1" fill="#eeeeee"/>
<rect x="257" y="595" width="766" height="1" fill="#c4c4c4"/>
<rect x="257" y="611" width="766" height="1" fill="#eeeeee"/>
<rect x="257" y="627" width="766" height="1" fill="#eeeeee"/>
<rect x="257" y="643" width="766" height="1" fill="#eeeeee"/>
<rect x="257" y="659" width="766" height="1" fill="#eeeeee"/>
<rect x="257" y="675" width="766" height="1" fill="#eeeeee"/>
<rect x="257" y="691" width="766" height="1" fill="#eeeeee"/>
<rect x="257" y="707" width="766" height="1" fill="#eeeeee"/>
<rect x="257" y="723" width="766" height="1" fill="#eeeeee"/>
<rect x="257" y="739" width="766" height="1" fill="#eeeeee"/>
<rect x="257" y="755" width="766" height="1" fill="#c4c4c4"/>
<rect x="257" y="771" width="766" height="1" fill="#eeeeee"/>
<g fill="#1a7b97">
<rect x="311.80" y="198.00" width="5" height="8" transform="rotate(0 314.30 202.00)"/>
<rect x="324.25" y="198.50" width="6.5" height="8" transform="rotate(25 327.50 202.50)"/>
<rect x="334.50" y="204.75" width="8" height="8.5" transform="rotate(62 338.50 209.00)"/>
<rect x="336.00" y="215.85" width="9" height="5.5" transform="rotate(0 340.50 218.60)"/>
<rect x="331.00" y="222.00" width="5" height="9" transform="rotate(135 333.50 226.50)"/>
<rect x="304.40" y="202.75" width="3.2" height="5.5" transform="rotate(-40 306.00 205.50)"/>
<rect x="301.40" y="206.75" width="3.2" height="5.5" transform="rotate(-65 303.00 209.50)"/>
<rect x="300.40" y="212.00" width="3.2" height="5" transform="rotate(-85 302.00 214.50)"/>
</g>
<ellipse cx="319.5" cy="218" rx="16.2" ry="12.2" fill="none" stroke="#1a7b97" stroke-width="5.8" transform="rotate(8 319.5 218)"/>
<path d="M 325 206 Q 333 210 333 220" fill="none" stroke="#d8eef5" stroke-width="0.7"/>
<path d="M 327 205.5 Q 335.5 210 335 219" fill="none" stroke="#d8eef5" stroke-width="0.6"/>
<path d="M 333 183.2 L 314 184.6 L 311.5 193.3 Z" fill="#1a7b97"/>
<path d="M 313 188 Q 293 198 291.6 213 Q 291.5 227 311 231.2 L 328.5 230.6 Q 307 229 300.5 221 Q 296 212 299.2 202 Q 303 195 311.5 192.8 Z" fill="#1a7b97"/>
<path d="M 288.8 201.2 Q 298 190 315.5 186" fill="none" stroke="#1a7b97" stroke-width="1.6" stroke-linecap="round"/>
<path d="M 292.3 222.5 Q 299 231.8 313 232.6 Q 322 232.8 328.7 230.8" fill="none" stroke="#1a7b97" stroke-width="1.4" stroke-linecap="round"/>
<text x="352.6" y="215.8" font-size="37" fill="#1a7b97" font-weight="bold" text-anchor="start" textLength="162" lengthAdjust="spacingAndGlyphs" stroke="#1a7b97" stroke-width="1.1">VALENTINA</text>
<text x="354.6" y="228.8" font-size="12.5" fill="#2a88ab" font-weight="normal" text-anchor="start" textLength="111.6" lengthAdjust="spacingAndGlyphs" stroke="#2a88ab" stroke-width="0.35">Visualize Data Now</text>
<path d="M 288.5 275.5 L 419.5 275.5 M 288.5 275.5 L 288.5 302" fill="none" stroke="#666" stroke-width="1" stroke-dasharray="3.5,2"/>
<text x="290" y="292.5" font-size="18" fill="#000" font-weight="bold" text-anchor="start" textLength="127" lengthAdjust="spacingAndGlyphs" >Customer Data</text>
<path d="M 445.5 457.3 L 473.6 457.3 L 473.6 373.6 L 514.75 373.6" fill="none" stroke="#000" stroke-width="1.4"/>
<path d="M 453.4 454.0 L 453.4 460.6 M 445.8 454.3 L 453.4 457.3 L 445.8 460.3" fill="none" stroke="#000" stroke-width="1.2"/>
<path d="M 506.8 370.3 L 506.8 376.90000000000003 M 510.6 370.3 L 510.6 376.90000000000003" stroke="#000" stroke-width="1.3"/>
<path d="M 445.5 437.4 L 479.5 437.4 L 479.5 605 L 514.9 605" fill="none" stroke="#000" stroke-width="1.4"/>
<path d="M 449.4 434.09999999999997 L 449.4 440.7 M 453.4 434.09999999999997 L 453.4 440.7" stroke="#000" stroke-width="1.3"/>
<path d="M 506.8 601.7 L 506.8 608.3 M 514.9 602 L 506.8 605 L 514.9 608" fill="none" stroke="#000" stroke-width="1.2"/>
<path d="M 514.9 581.7 L 487.8 581.7 L 487.8 780" fill="none" stroke="#000" stroke-width="1.4"/>
<path d="M 514.9 585.8 L 494.5 585.8 L 494.5 780" fill="none" stroke="#000" stroke-width="1.4"/>
<path d="M 506.8 578 L 506.8 589.5 M 510.6 578 L 510.6 589.5" stroke="#000" stroke-width="1.3"/>
<path d="M 685.5 584.8 L 735.6 584.8 L 735.6 373.6 L 786.9 373.6" fill="none" stroke="#000" stroke-width="1.4"/>
<path d="M 689.2 581.5 L 689.2 588.0999999999999 M 693.2 581.5 L 693.2 588.0999999999999" stroke="#000" stroke-width="1.3"/>
<path d="M 778.4 370.3 L 778.4 376.90000000000003 M 786.9 370.6 L 778.4 373.6 L 786.9 376.6" fill="none" stroke="#000" stroke-width="1.2"/>
<path d="M 786.9 409.7 L 741.4 409.7 L 741.4 780" fill="none" stroke="#000" stroke-width="1.4"/>
<path d="M 786.9 413.4 L 766.4 413.4 L 766.4 780" fill="none" stroke="#000" stroke-width="1.4"/>
<path d="M 778.4 406 L 778.4 417 M 782.5 406 L 782.5 417" stroke="#000" stroke-width="1.3"/>
<path d="M 786.9 513.6 L 729.5 513.6 L 729.5 780" fill="none" stroke="#000" stroke-width="1.4"/>
<path d="M 778.4 510.3 L 778.4 516.9 M 786.9 510.6 L 778.4 513.6 L 786.9 516.6" fill="none" stroke="#000" stroke-width="1.2"/>
<rect x="291.75" y="391.5" width="154.75" height="152.75" rx="5" fill="#000" opacity="0.10" filter="url(#blur1)"/>
<path d="M 290.75 394.5 Q 290.75 389.5 295.75 389.5 L 440.5 389.5 Q 445.5 389.5 445.5 394.5 L 445.5 537.25 Q 445.5 542.25 440.5 542.25 L 295.75 542.25 Q 290.75 542.25 290.75 537.25 Z" fill="#fff"/>
<path d="M 290.75 394.5 Q 290.75 389.5 295.75 389.5 L 440.5 389.5 Q 445.5 389.5 445.5 394.5 L 445.5 408.5 L 290.75 408.5 Z" fill="#c6df7c"/>
<path d="M 290.75 537.55 L 445.5 537.55 L 445.5 537.25 Q 445.5 542.25 440.5 542.25 L 295.75 542.25 Q 290.75 542.25 290.75 537.25 Z" fill="#c6df7c"/>
<rect x="291.5" y="489.25" width="153.25" height="19.5" fill="#c3c3c3"/>
<text x="295.25" y="503.55" font-size="13" fill="#fdfdfd" font-weight="bold" text-anchor="start" textLength="72" lengthAdjust="spacingAndGlyphs" >Triggers (1)</text>
<path d="M 431.0 494.95 L 438.0 498.85 L 431.0 502.75 Z" fill="#7b7b7b"/>
<text x="442.2" y="534.15" font-size="12" fill="#777" font-weight="normal" text-anchor="end" textLength="47.5" lengthAdjust="spacingAndGlyphs" >3 more...</text>
<path d="M 290.75 408.5 L 445.5 408.5 M 290.75 537.55 L 445.5 537.55" stroke="#000" stroke-width="1.4"/>
<path d="M 290.75 394.5 Q 290.75 389.5 295.75 389.5 L 440.5 389.5 Q 445.5 389.5 445.5 394.5 L 445.5 537.25 Q 445.5 542.25 440.5 542.25 L 295.75 542.25 Q 290.75 542.25 290.75 537.25 Z" fill="none" stroke="#000" stroke-width="1.4"/>
<rect x="296.75" y="394.0" width="12" height="12" fill="#fff" stroke="#3a4a3a" stroke-width="1"/>
<rect x="297.25" y="394.5" width="11" height="3" fill="#6790ae"/>
<rect x="299.70" y="394.5" width="0.6" height="11" fill="#a9b3bb"/>
<rect x="302.45" y="394.5" width="0.6" height="11" fill="#a9b3bb"/>
<rect x="305.20" y="394.5" width="0.6" height="11" fill="#a9b3bb"/>
<rect x="297.25" y="399.87" width="11" height="0.6" fill="#a9b3bb"/>
<rect x="297.25" y="402.53" width="11" height="0.6" fill="#a9b3bb"/>
<text x="316.55" y="404.5" font-size="13" fill="#1a2a10" font-weight="bold" text-anchor="start" >city</text>
<path d="M 430.0 395.3 L 439.0 395.3 L 434.5 402.5 Z" fill="#6c8a34"/>
<path d="M 300.75 414.45 L 305.45 419.25 L 300.75 424.05 L 296.05 419.25 Z" fill="url(#dia)" stroke="#4a78b0" stroke-width="0.6"/>
<text x="311.75" y="423.75" font-size="13" fill="#111" font-weight="normal" text-anchor="start" >city</text>
<text x="440.5" y="423.75" font-size="13" fill="#25256a" font-weight="normal" text-anchor="end" >VarChar(50)</text>
<path d="M 299.35 439.45 L 299.35 445.45 L 300.75 446.25 L 302.25 445.25 L 301.35 444.45 L 302.25 443.55 L 301.35 442.65 L 302.15 441.85 L 302.15 439.45 Z" fill="#f6d84a" stroke="#8a7020" stroke-width="0.8"/>
<circle cx="300.75" cy="435.95" r="3.7" fill="#f8de55" stroke="#8a7020" stroke-width="0.8"/>
<circle cx="300.75" cy="435.65" r="1.1" fill="#7a5a10"/>
<text x="311.75" y="443.75" font-size="13" fill="#111" font-weight="normal" text-anchor="start" >city_id</text>
<text x="440.5" y="443.75" font-size="13" fill="#25256a" font-weight="normal" text-anchor="end" >Long:I:U</text>
<path d="M 300.75 454.45 L 305.45 459.25 L 300.75 464.05 L 296.05 459.25 Z" fill="url(#diap)" stroke="#7a48a8" stroke-width="0.6"/>
<text x="311.75" y="463.75" font-size="13" fill="#111" font-weight="normal" text-anchor="start" >country_id</text>
<text x="440.5" y="463.75" font-size="13" fill="#25256a" font-weight="normal" text-anchor="end" >Long:I</text>
<path d="M 300.75 474.45 L 305.45 479.25 L 300.75 484.05 L 296.05 479.25 Z" fill="url(#dia)" stroke="#4a78b0" stroke-width="0.6"/>
<text x="311.75" y="483.75" font-size="13" fill="#111" font-weight="normal" text-anchor="start" >last_update</text>
<text x="440.5" y="483.75" font-size="13" fill="#25256a" font-weight="normal" text-anchor="end" >DateTime</text>
<rect x="515.75" y="327.25" width="170.5" height="116.75" rx="5" fill="#000" opacity="0.10" filter="url(#blur1)"/>
<path d="M 514.75 330.25 Q 514.75 325.25 519.75 325.25 L 680.25 325.25 Q 685.25 325.25 685.25 330.25 L 685.25 437.0 Q 685.25 442.0 680.25 442.0 L 519.75 442.0 Q 514.75 442.0 514.75 437.0 Z" fill="#fff"/>
<path d="M 514.75 330.25 Q 514.75 325.25 519.75 325.25 L 680.25 325.25 Q 685.25 325.25 685.25 330.25 L 685.25 344.25 L 514.75 344.25 Z" fill="#c6df7c"/>
<path d="M 514.75 437.3 L 685.25 437.3 L 685.25 437.0 Q 685.25 442.0 680.25 442.0 L 519.75 442.0 Q 514.75 442.0 514.75 437.0 Z" fill="#c6df7c"/>
<rect x="515.5" y="365.0" width="169.0" height="19.6" fill="#e1e1e1"/>
<rect x="515.5" y="405.0" width="169.0" height="19.5" fill="#c3c3c3"/>
<text x="519.25" y="419.3" font-size="13" fill="#fdfdfd" font-weight="bold" text-anchor="start" textLength="72" lengthAdjust="spacingAndGlyphs" >Triggers (1)</text>
<path d="M 670.75 410.7 L 677.75 414.6 L 670.75 418.5 Z" fill="#7b7b7b"/>
<text x="681.95" y="433.90000000000003" font-size="12" fill="#777" font-weight="normal" text-anchor="end" textLength="47.5" lengthAdjust="spacingAndGlyphs" >2 more...</text>
<path d="M 514.75 344.25 L 685.25 344.25 M 514.75 437.3 L 685.25 437.3" stroke="#000" stroke-width="1.4"/>
<path d="M 514.75 330.25 Q 514.75 325.25 519.75 325.25 L 680.25 325.25 Q 685.25 325.25 685.25 330.25 L 685.25 437.0 Q 685.25 442.0 680.25 442.0 L 519.75 442.0 Q 514.75 442.0 514.75 437.0 Z" fill="none" stroke="#000" stroke-width="1.4"/>
<rect x="520.75" y="329.75" width="12" height="12" fill="#fff" stroke="#3a4a3a" stroke-width="1"/>
<rect x="521.25" y="330.25" width="11" height="3" fill="#6790ae"/>
<rect x="523.70" y="330.25" width="0.6" height="11" fill="#a9b3bb"/>
<rect x="526.45" y="330.25" width="0.6" height="11" fill="#a9b3bb"/>
<rect x="529.20" y="330.25" width="0.6" height="11" fill="#a9b3bb"/>
<rect x="521.25" y="335.62" width="11" height="0.6" fill="#a9b3bb"/>
<rect x="521.25" y="338.28" width="11" height="0.6" fill="#a9b3bb"/>
<text x="540.55" y="340.25" font-size="13" fill="#1a2a10" font-weight="bold" text-anchor="start" >country</text>
<path d="M 669.75 331.05 L 678.75 331.05 L 674.25 338.25 Z" fill="#6c8a34"/>
<path d="M 524.75 350.2 L 529.45 355.0 L 524.75 359.8 L 520.05 355.0 Z" fill="url(#dia)" stroke="#4a78b0" stroke-width="0.6"/>
<text x="535.75" y="359.5" font-size="13" fill="#111" font-weight="normal" text-anchor="start" >country</text>
<text x="680.25" y="359.5" font-size="13" fill="#25256a" font-weight="normal" text-anchor="end" >VarChar(50)</text>
<path d="M 523.35 375.2 L 523.35 381.2 L 524.75 382.0 L 526.25 381.0 L 525.35 380.2 L 526.25 379.3 L 525.35 378.4 L 526.15 377.6 L 526.15 375.2 Z" fill="#f6d84a" stroke="#8a7020" stroke-width="0.8"/>
<circle cx="524.75" cy="371.7" r="3.7" fill="#f8de55" stroke="#8a7020" stroke-width="0.8"/>
<circle cx="524.75" cy="371.4" r="1.1" fill="#7a5a10"/>
<text x="535.75" y="379.5" font-size="13" fill="#111" font-weight="normal" text-anchor="start" >country_id</text>
<text x="680.25" y="379.5" font-size="13" fill="#25256a" font-weight="normal" text-anchor="end" >Long:I:U</text>
<path d="M 524.75 390.2 L 529.45 395.0 L 524.75 399.8 L 520.05 395.0 Z" fill="url(#dia)" stroke="#4a78b0" stroke-width="0.6"/>
<text x="535.75" y="399.5" font-size="13" fill="#111" font-weight="normal" text-anchor="start" >last_update</text>
<text x="680.25" y="399.5" font-size="13" fill="#25256a" font-weight="normal" text-anchor="end" >DateTime</text>
<rect x="515.9" y="519.7" width="170.60000000000002" height="218.25" rx="5" fill="#000" opacity="0.10" filter="url(#blur1)"/>
<path d="M 514.9 522.7 Q 514.9 517.7 519.9 517.7 L 680.5 517.7 Q 685.5 517.7 685.5 522.7 L 685.5 730.95 Q 685.5 735.95 680.5 735.95 L 519.9 735.95 Q 514.9 735.95 514.9 730.95 Z" fill="#fff"/>
<path d="M 514.9 522.7 Q 514.9 517.7 519.9 517.7 L 680.5 517.7 Q 685.5 517.7 685.5 522.7 L 685.5 536.7 L 514.9 536.7 Z" fill="#c6df7c"/>
<path d="M 514.9 731.25 L 685.5 731.25 L 685.5 730.95 Q 685.5 735.95 680.5 735.95 L 519.9 735.95 Q 514.9 735.95 514.9 730.95 Z" fill="#c6df7c"/>
<rect x="515.65" y="697.45" width="169.10000000000002" height="19.5" fill="#c3c3c3"/>
<text x="519.4" y="711.75" font-size="13" fill="#fdfdfd" font-weight="bold" text-anchor="start" textLength="72" lengthAdjust="spacingAndGlyphs" >Triggers (1)</text>
<path d="M 671.0 703.1500000000001 L 678.0 707.0500000000001 L 671.0 710.95 Z" fill="#7b7b7b"/>
<text x="682.2" y="727.85" font-size="12" fill="#777" font-weight="normal" text-anchor="end" textLength="47.5" lengthAdjust="spacingAndGlyphs" >3 more...</text>
<path d="M 514.9 536.7 L 685.5 536.7 M 514.9 731.25 L 685.5 731.25" stroke="#000" stroke-width="1.4"/>
<path d="M 514.9 522.7 Q 514.9 517.7 519.9 517.7 L 680.5 517.7 Q 685.5 517.7 685.5 522.7 L 685.5 730.95 Q 685.5 735.95 680.5 735.95 L 519.9 735.95 Q 514.9 735.95 514.9 730.95 Z" fill="none" stroke="#000" stroke-width="1.4"/>
<rect x="520.9" y="522.2" width="12" height="12" fill="#fff" stroke="#3a4a3a" stroke-width="1"/>
<rect x="521.4" y="522.7" width="11" height="3" fill="#6790ae"/>
<rect x="523.85" y="522.7" width="0.6" height="11" fill="#a9b3bb"/>
<rect x="526.60" y="522.7" width="0.6" height="11" fill="#a9b3bb"/>
<rect x="529.35" y="522.7" width="0.6" height="11" fill="#a9b3bb"/>
<rect x="521.4" y="528.07" width="11" height="0.6" fill="#a9b3bb"/>
<rect x="521.4" y="530.73" width="11" height="0.6" fill="#a9b3bb"/>
<text x="540.6999999999999" y="532.7" font-size="13" fill="#1a2a10" font-weight="bold" text-anchor="start" >address</text>
<path d="M 670.0 523.5 L 679.0 523.5 L 674.5 530.7 Z" fill="#6c8a34"/>
<path d="M 524.9 542.6500000000001 L 529.6 547.45 L 524.9 552.25 L 520.1999999999999 547.45 Z" fill="url(#dia)" stroke="#4a78b0" stroke-width="0.6"/>
<text x="535.9" y="551.95" font-size="13" fill="#111" font-weight="normal" text-anchor="start" >address</text>
<text x="680.5" y="551.95" font-size="13" fill="#25256a" font-weight="normal" text-anchor="end" >VarChar(50)</text>
<path d="M 524.9 562.6500000000001 L 529.6 567.45 L 524.9 572.25 L 520.1999999999999 567.45 Z" fill="url(#dia)" stroke="#4a78b0" stroke-width="0.6"/>
<text x="535.9" y="571.95" font-size="13" fill="#111" font-weight="normal" text-anchor="start" >address2</text>
<text x="680.5" y="571.95" font-size="13" fill="#25256a" font-weight="normal" text-anchor="end" >VarChar(50):N</text>
<path d="M 523.5 587.6500000000001 L 523.5 593.6500000000001 L 524.9 594.45 L 526.4 593.45 L 525.5 592.6500000000001 L 526.4 591.75 L 525.5 590.85 L 526.3 590.0500000000001 L 526.3 587.6500000000001 Z" fill="#f6d84a" stroke="#8a7020" stroke-width="0.8"/>
<circle cx="524.9" cy="584.1500000000001" r="3.7" fill="#f8de55" stroke="#8a7020" stroke-width="0.8"/>
<circle cx="524.9" cy="583.85" r="1.1" fill="#7a5a10"/>
<text x="535.9" y="591.95" font-size="13" fill="#111" font-weight="normal" text-anchor="start" >address_id</text>
<text x="680.5" y="591.95" font-size="13" fill="#25256a" font-weight="normal" text-anchor="end" >Long:I:U</text>
<path d="M 524.9 602.6500000000001 L 529.6 607.45 L 524.9 612.25 L 520.1999999999999 607.45 Z" fill="url(#diap)" stroke="#7a48a8" stroke-width="0.6"/>
<text x="535.9" y="611.95" font-size="13" fill="#111" font-weight="normal" text-anchor="start" >city_id</text>
<text x="680.5" y="611.95" font-size="13" fill="#25256a" font-weight="normal" text-anchor="end" >Long:I</text>
<path d="M 524.9 622.6500000000001 L 529.6 627.45 L 524.9 632.25 L 520.1999999999999 627.45 Z" fill="url(#dia)" stroke="#4a78b0" stroke-width="0.6"/>
<text x="535.9" y="631.95" font-size="13" fill="#111" font-weight="normal" text-anchor="start" >district</text>
<text x="680.5" y="631.95" font-size="13" fill="#25256a" font-weight="normal" text-anchor="end" >VarChar(20)</text>
<path d="M 524.9 642.6500000000001 L 529.6 647.45 L 524.9 652.25 L 520.1999999999999 647.45 Z" fill="url(#dia)" stroke="#4a78b0" stroke-width="0.6"/>
<text x="535.9" y="651.95" font-size="13" fill="#111" font-weight="normal" text-anchor="start" >last_update</text>
<text x="680.5" y="651.95" font-size="13" fill="#25256a" font-weight="normal" text-anchor="end" >DateTime</text>
<path d="M 524.9 662.6500000000001 L 529.6 667.45 L 524.9 672.25 L 520.1999999999999 667.45 Z" fill="url(#dia)" stroke="#4a78b0" stroke-width="0.6"/>
<text x="535.9" y="671.95" font-size="13" fill="#111" font-weight="normal" text-anchor="start" >phone</text>
<text x="680.5" y="671.95" font-size="13" fill="#25256a" font-weight="normal" text-anchor="end" >VarChar(20)</text>
<path d="M 524.9 682.6500000000001 L 529.6 687.45 L 524.9 692.25 L 520.1999999999999 687.45 Z" fill="url(#dia)" stroke="#4a78b0" stroke-width="0.6"/>
<text x="535.9" y="691.95" font-size="13" fill="#111" font-weight="normal" text-anchor="start" >postal_code</text>
<text x="680.5" y="691.95" font-size="13" fill="#25256a" font-weight="normal" text-anchor="end" >VarC...0):N</text>
<rect x="787.9" y="327.4" width="154.60000000000002" height="235.30000000000007" rx="5" fill="#000" opacity="0.10" filter="url(#blur1)"/>
<path d="M 786.9 330.4 Q 786.9 325.4 791.9 325.4 L 936.5 325.4 Q 941.5 325.4 941.5 330.4 L 941.5 555.7 Q 941.5 560.7 936.5 560.7 L 791.9 560.7 Q 786.9 560.7 786.9 555.7 Z" fill="#fff"/>
<path d="M 786.9 330.4 Q 786.9 325.4 791.9 325.4 L 936.5 325.4 Q 941.5 325.4 941.5 330.4 L 941.5 344.4 L 786.9 344.4 Z" fill="#c6df7c"/>
<path d="M 786.9 556.0 L 941.5 556.0 L 941.5 555.7 Q 941.5 560.7 936.5 560.7 L 791.9 560.7 Q 786.9 560.7 786.9 555.7 Z" fill="#c6df7c"/>
<rect x="787.65" y="465.15" width="153.10000000000002" height="19.6" fill="#e1e1e1"/>
<rect x="787.65" y="525.15" width="153.10000000000002" height="19.5" fill="#c3c3c3"/>
<text x="791.4" y="539.4499999999999" font-size="13" fill="#fdfdfd" font-weight="bold" text-anchor="start" textLength="72" lengthAdjust="spacingAndGlyphs" >Triggers (1)</text>
<path d="M 927.0 530.85 L 934.0 534.75 L 927.0 538.65 Z" fill="#7b7b7b"/>
<text x="938.2" y="552.6" font-size="12" fill="#777" font-weight="normal" text-anchor="end" textLength="47.5" lengthAdjust="spacingAndGlyphs" >3 more...</text>
<path d="M 786.9 344.4 L 941.5 344.4 M 786.9 556.0 L 941.5 556.0" stroke="#000" stroke-width="1.4"/>
<path d="M 786.9 330.4 Q 786.9 325.4 791.9 325.4 L 936.5 325.4 Q 941.5 325.4 941.5 330.4 L 941.5 555.7 Q 941.5 560.7 936.5 560.7 L 791.9 560.7 Q 786.9 560.7 786.9 555.7 Z" fill="none" stroke="#000" stroke-width="1.4"/>
<rect x="792.9" y="329.9" width="12" height="12" fill="#fff" stroke="#3a4a3a" stroke-width="1"/>
<rect x="793.4" y="330.4" width="11" height="3" fill="#6790ae"/>
<rect x="795.85" y="330.4" width="0.6" height="11" fill="#a9b3bb"/>
<rect x="798.60" y="330.4" width="0.6" height="11" fill="#a9b3bb"/>
<rect x="801.35" y="330.4" width="0.6" height="11" fill="#a9b3bb"/>
<rect x="793.4" y="335.77" width="11" height="0.6" fill="#a9b3bb"/>
<rect x="793.4" y="338.43" width="11" height="0.6" fill="#a9b3bb"/>
<text x="812.6999999999999" y="340.4" font-size="13" fill="#1a2a10" font-weight="bold" text-anchor="start" >customer</text>
<path d="M 926.0 331.2 L 935.0 331.2 L 930.5 338.4 Z" fill="#6c8a34"/>
<path d="M 796.9 350.34999999999997 L 801.6 355.15 L 796.9 359.95 L 792.1999999999999 355.15 Z" fill="url(#dia)" stroke="#4a78b0" stroke-width="0.6"/>
<text x="807.9" y="359.65" font-size="13" fill="#111" font-weight="normal" text-anchor="start" >active</text>
<text x="936.5" y="359.65" font-size="13" fill="#25256a" font-weight="normal" text-anchor="end" >Boolean:I</text>
<path d="M 796.9 370.34999999999997 L 801.6 375.15 L 796.9 379.95 L 792.1999999999999 375.15 Z" fill="url(#diap)" stroke="#7a48a8" stroke-width="0.6"/>
<text x="807.9" y="379.65" font-size="13" fill="#111" font-weight="normal" text-anchor="start" >address_id</text>
<text x="936.5" y="379.65" font-size="13" fill="#25256a" font-weight="normal" text-anchor="end" >Long:I</text>
<path d="M 796.9 390.34999999999997 L 801.6 395.15 L 796.9 399.95 L 792.1999999999999 395.15 Z" fill="url(#dia)" stroke="#4a78b0" stroke-width="0.6"/>
<text x="807.9" y="399.65" font-size="13" fill="#111" font-weight="normal" text-anchor="start" >create_date</text>
<text x="936.5" y="399.65" font-size="13" fill="#25256a" font-weight="normal" text-anchor="end" >DateTime</text>
<path d="M 795.5 415.34999999999997 L 795.5 421.34999999999997 L 796.9 422.15 L 798.4 421.15 L 797.5 420.34999999999997 L 798.4 419.45 L 797.5 418.54999999999995 L 798.3 417.75 L 798.3 415.34999999999997 Z" fill="#f6d84a" stroke="#8a7020" stroke-width="0.8"/>
<circle cx="796.9" cy="411.84999999999997" r="3.7" fill="#f8de55" stroke="#8a7020" stroke-width="0.8"/>
<circle cx="796.9" cy="411.54999999999995" r="1.1" fill="#7a5a10"/>
<text x="807.9" y="419.65" font-size="13" fill="#111" font-weight="normal" text-anchor="start" >customer_id</text>
<text x="936.5" y="419.65" font-size="13" fill="#25256a" font-weight="normal" text-anchor="end" >Long:I:U</text>
<path d="M 796.9 430.34999999999997 L 801.6 435.15 L 796.9 439.95 L 792.1999999999999 435.15 Z" fill="url(#dia)" stroke="#4a78b0" stroke-width="0.6"/>
<text x="807.9" y="439.65" font-size="13" fill="#111" font-weight="normal" text-anchor="start" >email</text>
<text x="936.5" y="439.65" font-size="13" fill="#25256a" font-weight="normal" text-anchor="end" >VarChar(50):N</text>
<path d="M 796.9 450.34999999999997 L 801.6 455.15 L 796.9 459.95 L 792.1999999999999 455.15 Z" fill="url(#dia)" stroke="#4a78b0" stroke-width="0.6"/>
<text x="807.9" y="459.65" font-size="13" fill="#111" font-weight="normal" text-anchor="start" >first_name</text>
<text x="936.5" y="459.65" font-size="13" fill="#25256a" font-weight="normal" text-anchor="end" >VarC...(45)</text>
<path d="M 796.9 470.34999999999997 L 801.6 475.15 L 796.9 479.95 L 792.1999999999999 475.15 Z" fill="url(#dia)" stroke="#4a78b0" stroke-width="0.6"/>
<text x="807.9" y="479.65" font-size="13" fill="#111" font-weight="normal" text-anchor="start" >last_name</text>
<text x="936.5" y="479.65" font-size="13" fill="#25256a" font-weight="normal" text-anchor="end" >VarC...5):I</text>
<path d="M 796.9 490.34999999999997 L 801.6 495.15 L 796.9 499.95 L 792.1999999999999 495.15 Z" fill="url(#dia)" stroke="#4a78b0" stroke-width="0.6"/>
<text x="807.9" y="499.65" font-size="13" fill="#111" font-weight="normal" text-anchor="start" >last_update</text>
<text x="936.5" y="499.65" font-size="13" fill="#25256a" font-weight="normal" text-anchor="end" >DateTime</text>
<path d="M 796.9 510.34999999999997 L 801.6 515.15 L 796.9 519.9499999999999 L 792.1999999999999 515.15 Z" fill="url(#diap)" stroke="#7a48a8" stroke-width="0.6"/>
<text x="807.9" y="519.65" font-size="13" fill="#111" font-weight="normal" text-anchor="start" >store_id</text>
<text x="936.5" y="519.65" font-size="13" fill="#25256a" font-weight="normal" text-anchor="end" >Long:I</text>
</g></svg>
</svg>
</body></html>
